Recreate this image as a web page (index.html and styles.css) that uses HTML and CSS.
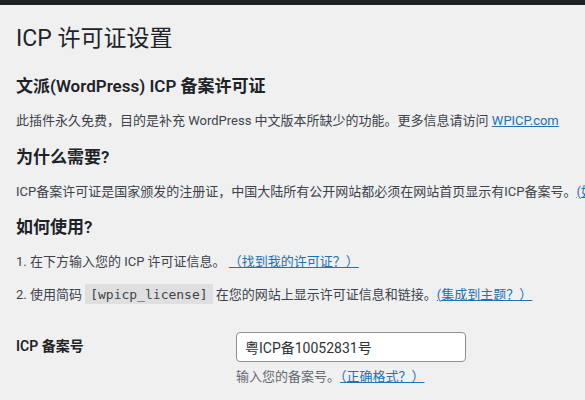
FILE: index.html
```html
<!DOCTYPE html>
<html lang="zh-CN">

<head>
    <meta charset="UTF-8" />
    <meta name="viewport" content="width=device-width, initial-scale=1" />
    <title>ICP 许可证设置</title>
    <link rel="stylesheet" href="styles.css">
</head>

<body>
    <div class="admin-bar"></div>
    <div class="wrap">
        <h1>ICP 许可证设置</h1>

        <h2>文派(WordPress) ICP 备案许可证</h2>
        <p>此插件永久免费，目的是补充 WordPress 中文版本所缺少的功能。更多信息请访问 <a href="#">WPICP.com</a></p>

        <h2>为什么需要?</h2>
        <p>ICP备案许可证是国家颁发的注册证，中国大陆所有公开网站都必须在网站首页显示有ICP备案号。<a href="#">(如何申请？）</a></p>

        <h2>如何使用?</h2>
        <p>1. 在下方输入您的 ICP 许可证信息。 <a href="#">（找到我的许可证？）</a></p>
        <p>2. 使用简码 <code>[wpicp_license]</code> 在您的网站上显示许可证信息和链接。<a href="#">(集成到主题？）</a></p>

        <table class="form-table">
            <tr>
                <th><label for="icpNumber">ICP 备案号</label></th>
                <td>
                    <input type="text" id="icpNumber" class="regular-text" value="粤ICP备10052831号" />
                    <p class="description">输入您的备案号。<a href="#">（正确格式？）</a></p>
                </td>
            </tr>
        </table>
    </div>
</body>

</html>
```

FILE: styles.css
```css
body {
    margin: 0;
    background-color: #f0f0f1;
    color: #3c434a;
    font-family: Roboto, "Noto Sans CJK SC", sans-serif;
    font-size: 13px;
    line-height: 1.5;
    overflow: hidden;
}

.admin-bar {
    height: 5px;
    background-color: #1d2327;
}

.wrap {
    min-width: 900px;
    padding-left: 16px;
}

h1 {
    margin: 19px 0 21px;
    font-size: 23px;
    font-weight: 400;
    line-height: 30px;
    color: #1d2327;
}

h2 {
    margin: 15px 0 14px;
    font-size: 17px;
    font-weight: 600;
    line-height: 22px;
    color: #1d2327;
}

p {
    margin: 13px 0;
}

a {
    color: #2271b1;
}

code {
    padding: 3px 5px 2px;
    background-color: rgba(0, 0, 0, 0.07);
    font-family: "DejaVu Sans Mono", monospace;
    font-size: 13px;
}

.form-table {
    margin-top: 13px;
    border-collapse: collapse;
}

.form-table th {
    width: 200px;
    padding: 20px 10px 20px 0;
    vertical-align: top;
    text-align: left;
    font-size: 14px;
    font-weight: 600;
    line-height: 1.3;
    color: #1d2327;
}

.form-table td {
    padding: 15px 10px;
    vertical-align: top;
}

.regular-text {
    box-sizing: border-box;
    width: 230px;
    height: 30px;
    margin: 0;
    padding: 0 8px;
    border: 1px solid #8c8f94;
    border-radius: 4px;
    background-color: #fff;
    color: #2c3338;
    font-family: inherit;
    font-size: 14px;
}

.description {
    margin: 5px 0 0;
    color: #646970;
}
```
